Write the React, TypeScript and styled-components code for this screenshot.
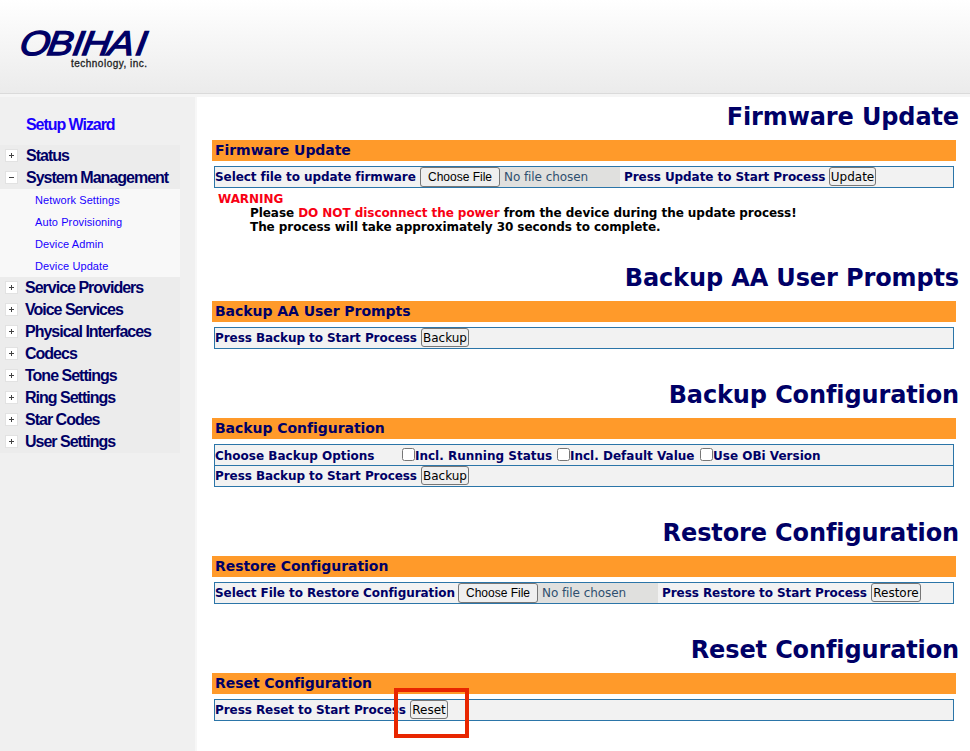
import React from 'react';
import styled, { createGlobalStyle } from 'styled-components';

const GlobalStyle = createGlobalStyle`
  * { box-sizing: border-box; }
  html, body { margin: 0; padding: 0; }
  body {
    background: #fff;
    overflow: hidden;
    font-family: "DejaVu Sans", sans-serif;
    color: #000066;
  }
`;

const Page = styled.div`
  display: flex;
  flex-direction: column;
  width: 970px;
  height: 751px;
  overflow: hidden;
`;

const Header = styled.header`
  flex: none;
  height: 97px;
  padding: 22px 0 0 15px;
  background:
    linear-gradient(#f5f5f5, #f5f5f5) 0 94px / 100% 3px no-repeat,
    linear-gradient(#dadada, #dadada) 0 93px / 100% 1px no-repeat,
    linear-gradient(#ffffff 0, #ebebeb 93px);
`;

const Body = styled.div`
  flex: 1;
  display: flex;
  min-height: 0;
`;

const Sidebar = styled.nav`
  flex: none;
  width: 197px;
  padding-top: 16px;
  background: #f0f0f0;
  border-right: 2px solid #f7f7f7;
  font-family: "Liberation Sans", Arial, sans-serif;
`;

const WizardLink = styled.a`
  display: block;
  height: 32px;
  padding-left: 26px;
  line-height: 23px;
  font-size: 16px;
  font-weight: bold;
  letter-spacing: -1.05px;
  color: #1900ff;
`;

const MenuRow = styled.div<{ $gap: number }>`
  display: flex;
  align-items: center;
  gap: ${(p) => p.$gap}px;
  width: 180px;
  height: 22px;
  padding-left: 5px;
  background: #ececec;
  font-size: 16px;
  font-weight: bold;
  letter-spacing: -1px;
  white-space: nowrap;
`;

const Toggle = styled.svg`
  display: block;
  flex: none;
  width: 13px;
  height: 13px;
  margin-bottom: 2px;
`;

const SubMenu = styled.div`
  width: 180px;
  background: #f8f8f8;
`;

const SubLink = styled.a`
  display: block;
  height: 22px;
  padding-left: 35px;
  line-height: 23px;
  font-size: 11px;
  letter-spacing: 0.1px;
  color: #1900ff;
`;

const Main = styled.main`
  flex: 1;
  display: flex;
  flex-direction: column;
  gap: 33px;
  padding: 7px 14px 0 15px;
`;

const Section = styled.section`
  flex: none;
`;

const Title = styled.h1`
  height: 36px;
  margin: 0 -3px 0 0;
  line-height: 26px;
  font-size: 24px;
  font-weight: bold;
  letter-spacing: -0.12px;
  text-align: right;
`;

const Bar = styled.h2`
  height: 21px;
  margin: 0 0 5px;
  padding-left: 3px;
  line-height: 20px;
  background: #ff9a2a;
  font-size: 14px;
  font-weight: bold;
  letter-spacing: -0.05px;
`;

const Table = styled.div`
  margin: 0 2px;
  border: 1px solid #2b75a8;
  background: #f2f2f2;
`;

const Row = styled.div`
  display: flex;
  align-items: center;
  height: 20px;
  font-size: 12px;
  font-weight: bold;
  letter-spacing: -0.07px;
  white-space: nowrap;

  & + & {
    height: 21px;
    border-top: 1px solid #2b75a8;
  }
`;

const Label = styled.span<{ $w: number }>`
  flex: none;
  width: ${(p) => p.$w}px;
`;

const OptionLabel = styled(Label)`
  padding-top: 1px;
  letter-spacing: 0;
`;

const Button = styled.button<{ $w: number }>`
  flex: none;
  width: ${(p) => p.$w}px;
  height: 19px;
  margin-bottom: 1px;
  padding: 2px 0 0;
  border: 1px solid #767676;
  border-radius: 3px;
  background: #efefef;
  color: #000;
  font: 12px/15px "DejaVu Sans", sans-serif;
  letter-spacing: 0;
  text-align: center;
  white-space: nowrap;
`;

const FileButton = styled(Button)`
  height: 20px;
  margin-bottom: 0;
  padding: 0;
  font: 12px/18px "Liberation Sans", Arial, sans-serif;
  letter-spacing: 0;
`;

const FileField = styled.span`
  display: flex;
  align-items: center;
  flex: none;
  width: 200px;
  height: 20px;
  margin-right: 4px;
  gap: 4px;
  background: #e0e0de;
  color: #2f4f6f;
  font-weight: normal;
`;

const Checkbox = styled.input`
  flex: none;
  width: 13px;
  height: 13px;
  margin: 0 0 2px;
`;

const Warning = styled.div`
  height: 44px;
  padding: 4px 0 0 6px;
  color: #000;
  font-size: 12px;
  font-weight: bold;
  line-height: 14px;
  letter-spacing: -0.06px;
  white-space: nowrap;
`;

const WarningBody = styled.div`
  padding-left: 32px;
`;

const Alert = styled.span`
  color: #f80014;
`;

const ButtonSpot = styled.span`
  position: relative;
  display: flex;
`;

const Highlight = styled.span`
  position: absolute;
  left: -16px;
  top: -12px;
  width: 75px;
  height: 50px;
  border: 4px solid #e82600;
  pointer-events: none;
`;

function Logo() {
  return (
    <svg width="140" height="54" viewBox="0 0 140 54" role="img" aria-label="Obihai technology, inc.">
      <g fontFamily="Liberation Sans, Arial, sans-serif">
        <text
          transform="translate(0 32.5) skewX(-9) scale(1.12 1)"
          x="3.1 27.7 50.4 58.9 82.1 106.7"
          y="0"
          fontSize="34.5"
          fontStyle="italic"
          fill="#000066"
          stroke="#000066"
          strokeWidth="1.3"
        >
          OBIHAI
        </text>
        <text x="56" y="45" fontSize="10" fill="#222" stroke="#222" strokeWidth="0.3" textLength="76">
          technology, inc.
        </text>
      </g>
    </svg>
  );
}

function ToggleIcon({ open }: { open?: boolean }) {
  return (
    <Toggle viewBox="0 0 13 13">
      <rect x="0.5" y="0.5" width="12" height="12" fill="#fff" stroke="#e2e2e2" />
      <path d={open ? 'M4 6.5h5' : 'M4 6.5h5M6.5 4v5'} stroke="#444" strokeWidth="1" fill="none" />
    </Toggle>
  );
}

function MenuItem({ label, open, gap = 7 }: { label: string; open?: boolean; gap?: number }) {
  return (
    <MenuRow $gap={gap}>
      <ToggleIcon open={open} />
      {label}
    </MenuRow>
  );
}

function FilePicker() {
  return (
    <FileField>
      <FileButton $w={80}>Choose File</FileButton>
      No file chosen
    </FileField>
  );
}

const subLinks = ['Network Settings', 'Auto Provisioning', 'Device Admin', 'Device Update'];
const menuItems = [
  'Service Providers',
  'Voice Services',
  'Physical Interfaces',
  'Codecs',
  'Tone Settings',
  'Ring Settings',
  'Star Codes',
  'User Settings',
];

function Panel({ title, children }: { title: string; children: React.ReactNode }) {
  return (
    <Section>
      <Title>{title}</Title>
      <Bar>{title}</Bar>
      {children}
    </Section>
  );
}

export default function App() {
  return (
    <Page>
      <GlobalStyle />
      <Header>
        <Logo />
      </Header>
      <Body>
        <Sidebar>
          <WizardLink>Setup Wizard</WizardLink>
          <MenuItem label="Status" gap={8} />
          <MenuItem label="System Management" gap={8} open />
          <SubMenu>
            {subLinks.map((s) => (
              <SubLink key={s}>{s}</SubLink>
            ))}
          </SubMenu>
          {menuItems.map((m) => (
            <MenuItem key={m} label={m} />
          ))}
        </Sidebar>
        <Main>
          <Panel title="Firmware Update">
            <Table>
              <Row>
                <Label $w={205}>Select file to update firmware</Label>
                <FilePicker />
                <Label $w={205}>Press Update to Start Process</Label>
                <Button $w={47}>Update</Button>
              </Row>
            </Table>
            <Warning>
              <Alert>WARNING</Alert>
              <WarningBody>
                Please <Alert>DO NOT disconnect the power</Alert> from the device during the update process!
              </WarningBody>
              <WarningBody>The process will take approximately 30 seconds to complete.</WarningBody>
            </Warning>
          </Panel>
          <Panel title="Backup AA User Prompts">
            <Table>
              <Row>
                <Label $w={206}>Press Backup to Start Process</Label>
                <Button $w={48}>Backup</Button>
              </Row>
            </Table>
          </Panel>
          <Panel title="Backup Configuration">
            <Table>
              <Row>
                <OptionLabel $w={187}>Choose Backup Options</OptionLabel>
                <Checkbox type="checkbox" />
                <OptionLabel $w={142}>Incl. Running Status</OptionLabel>
                <Checkbox type="checkbox" />
                <OptionLabel $w={130}>Incl. Default Value</OptionLabel>
                <Checkbox type="checkbox" />
                <OptionLabel $w={120}>Use OBi Version</OptionLabel>
              </Row>
              <Row>
                <Label $w={206}>Press Backup to Start Process</Label>
                <Button $w={48}>Backup</Button>
              </Row>
            </Table>
          </Panel>
          <Panel title="Restore Configuration">
            <Table>
              <Row>
                <Label $w={243}>Select File to Restore Configuration</Label>
                <FilePicker />
                <Label $w={209}>Press Restore to Start Process</Label>
                <Button $w={50}>Restore</Button>
              </Row>
            </Table>
          </Panel>
          <Panel title="Reset Configuration">
            <Table>
              <Row>
                <Label $w={195}>Press Reset to Start Process</Label>
                <ButtonSpot>
                  <Button $w={38}>Reset</Button>
                  <Highlight />
                </ButtonSpot>
              </Row>
            </Table>
          </Panel>
        </Main>
      </Body>
    </Page>
  );
}
